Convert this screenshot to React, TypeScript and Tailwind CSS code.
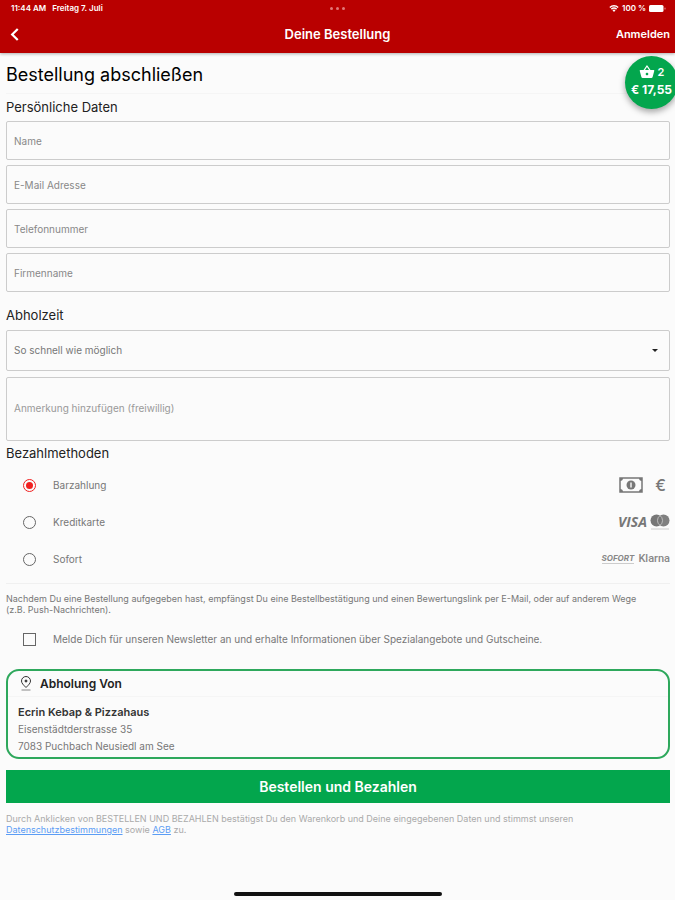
import { useState } from "react";
import { MdShoppingBasket } from "react-icons/md";

const fields = [
  { id: "name", label: "Name", type: "text" },
  { id: "email", label: "E-Mail Adresse", type: "email" },
  { id: "phone", label: "Telefonnummer", type: "tel" },
  { id: "company", label: "Firmenname", type: "text" },
];

export default function App() {
  return (
    <div className="relative flex min-h-screen flex-col overflow-hidden bg-[#fbfbfb] font-['Inter',sans-serif] text-[#222]">
      <Header />
      <CartBadge />
      <main className="pr-[5px] pl-1.5">
        <h1 className="flex h-[41px] items-center border-b border-[#f5f5f5] pt-0.5 text-[18px] text-black">
          Bestellung abschließen
        </h1>
        <PersonalData />
        <PickupTime />
        <PaymentMethods />
        <Newsletter />
        <PickupAddress />
        <button className="mt-[11px] block h-[33px] w-full bg-[#03a64d] text-[14px] font-semibold text-white">
          Bestellen und Bezahlen
        </button>
        <p className="mt-2.5 pr-16 text-[9px] leading-[11px] text-[#aaa]">
          Durch Anklicken von BESTELLEN UND BEZAHLEN bestätigst Du den Warenkorb
          und Deine eingegebenen Daten und stimmst unseren{" "}
          <a href="#datenschutz" className="text-[#5b9df5] underline">
            Datenschutzbestimmungen
          </a>{" "}
          sowie{" "}
          <a href="#agb" className="text-[#5b9df5] underline">
            AGB
          </a>{" "}
          zu.
        </p>
      </main>
      <div className="mx-auto mt-auto mb-1 h-1 w-[208px] rounded-full bg-[#111]" />
    </div>
  );
}

const Header = () => {
  return (
    <header className="bg-[#b90000] text-white shadow-[0_1px_3px_rgba(0,0,0,0.3)]">
      <div className="grid h-4 grid-cols-3 items-center px-[9px] text-[8px] font-semibold">
        <div className="flex gap-1.5 pl-0.5">
          <span>11:44 AM</span>
          <span>Freitag 7. Juli</span>
        </div>
        <div className="flex justify-center gap-[3px]">
          <span className="size-[3px] rounded-full bg-[#e27878]" />
          <span className="size-[3px] rounded-full bg-[#e27878]" />
          <span className="size-[3px] rounded-full bg-[#e27878]" />
        </div>
        <div className="flex items-center justify-end gap-[3px]">
          <svg viewBox="0 0 20 15" className="h-[7px] w-[10px]" fill="white">
            <path d="M10 15 6.8 11.4a4.6 4.6 0 0 1 6.4 0z" />
            <path d="M5.5 10 3.4 7.7a9.7 9.7 0 0 1 13.2 0L14.5 10a6.5 6.5 0 0 0-9 0z" />
            <path d="M2.2 6.4 0 4.1a14.5 14.5 0 0 1 20 0l-2.2 2.3a11.4 11.4 0 0 0-15.6 0z" />
          </svg>
          <span>100 %</span>
          <svg viewBox="0 0 34 14" className="h-[7px] w-[17px]">
            <rect x="0" y="0" width="29" height="14" rx="3" fill="white" />
            <rect x="31" y="5" width="2" height="4" rx="1" fill="#e9a0a0" />
          </svg>
        </div>
      </div>
      <div className="grid h-[37px] grid-cols-3 items-center px-[5px]">
        <button aria-label="Zurück" className="w-fit pl-[5px]">
          <svg
            viewBox="0 0 9 14"
            className="h-[13px] w-[9px]"
            fill="none"
            stroke="white"
            strokeWidth="2.4"
          >
            <path d="M8 1 2 7l6 6" />
          </svg>
        </button>
        <span className="text-center text-[13px] font-semibold">
          Deine Bestellung
        </span>
        <a href="#anmelden" className="text-right text-[11px] font-semibold">
          Anmelden
        </a>
      </div>
    </header>
  );
};

const CartBadge = () => {
  return (
    <button className="absolute top-14 -right-[3px] flex size-[53px] flex-col items-center justify-center rounded-full bg-[#03a64d] pb-1 text-white shadow-[0_3px_6px_rgba(0,0,0,0.35)]">
      <span className="flex items-center gap-[3px] text-[11px] leading-[18px] font-semibold">
        <MdShoppingBasket className="size-4" />2
      </span>
      <span className="text-[12px] leading-[18px] font-bold">€ 17,55</span>
    </button>
  );
};

const PersonalData = () => {
  return (
    <section>
      <h2 className="flex h-[27px] items-center text-[13px]">
        Persönliche Daten
      </h2>
      <div className="flex flex-col gap-[5px]">
        {fields.map((field) => (
          <input
            key={field.id}
            id={field.id}
            type={field.type}
            aria-label={field.label}
            placeholder={field.label}
            className="h-[39px] w-full rounded-xs border border-[#ccc] px-[7px] text-[10px] placeholder:text-[#888]"
          />
        ))}
      </div>
    </section>
  );
};

const PickupTime = () => {
  return (
    <section>
      <h2 className="mt-2.5 flex h-7 items-center text-[13px]">
        <label htmlFor="time">Abholzeit</label>
      </h2>
      <div className="relative">
        <select
          id="time"
          className="block h-[41px] w-full appearance-none rounded-xs border border-[#ccc] px-[7px] text-[10px] text-[#777]"
        >
          <option>So schnell wie möglich</option>
        </select>
        <svg
          viewBox="0 0 6 3"
          className="pointer-events-none absolute top-[19px] right-3 h-[3px] w-[6px]"
        >
          <path d="M0 0h6L3 3z" fill="#222" />
        </svg>
      </div>
      <textarea
        aria-label="Anmerkung hinzufügen (freiwillig)"
        placeholder="Anmerkung hinzufügen (freiwillig)"
        className="mt-1.5 block h-16 w-full resize-none rounded-xs border border-[#ccc] px-[7px] py-[22px] text-[10px] leading-4 placeholder:text-[#999]"
      />
    </section>
  );
};

const CashIcons = () => (
  <div className="flex items-center gap-3 pr-1 pb-0.5">
    <svg viewBox="0 0 24 16" className="h-4 w-6" fill="none" stroke="#777">
      <rect x="1" y="1" width="22" height="14" strokeWidth="1.5" />
      <path
        d="M1 1h3a3 3 0 0 1-3 3zM23 1h-3a3 3 0 0 0 3 3zM1 15h3a3 3 0 0 0-3-3zM23 15h-3a3 3 0 0 1 3-3z"
        fill="#777"
        stroke="none"
      />
      <circle cx="12" cy="8" r="4.5" fill="#777" stroke="none" />
      <path d="M12 5.5v5" stroke="#fbfbfb" strokeWidth="1.4" />
    </svg>
    <span className="text-[16px] leading-5 font-medium text-[#777]">€</span>
  </div>
);

const CardIcons = () => (
  <div className="flex items-center gap-[3px] pb-0.5">
    <span className="font-['Open_Sans',sans-serif] text-[14px] leading-4 font-bold text-[#777] italic">
      VISA
    </span>
    <svg viewBox="0 0 20 16" className="h-4 w-5">
      <circle cx="6.5" cy="6.5" r="6" fill="#777" />
      <circle cx="13.5" cy="6.5" r="6" fill="#808080" />
      <path
        d="M10 1.6a6 6 0 0 1 0 9.8a6 6 0 0 1 0-9.8z"
        fill="#777"
        stroke="#ccc"
        strokeWidth=".8"
      />
      <path d="M1 15h18" stroke="#ccc" />
    </svg>
  </div>
);

const SofortIcons = () => (
  <div className="flex items-center gap-1 pb-0.5 text-[#888]">
    <span className="border-b border-[#ccc] text-[8px] leading-[9px] font-bold italic">
      SOFORT
    </span>
    <span className="font-['Roboto',sans-serif] text-[11px] leading-4 font-medium">
      Klarna
    </span>
  </div>
);

const methods = [
  { id: "cash", label: "Barzahlung", icons: <CashIcons /> },
  { id: "card", label: "Kreditkarte", icons: <CardIcons /> },
  { id: "sofort", label: "Sofort", icons: <SofortIcons /> },
];

const PaymentMethods = () => {
  const [method, setMethod] = useState("cash");
  return (
    <section className="border-b border-[#f0f0f0] pb-[5px]">
      <h2 className="flex h-[26px] items-center text-[13px]">Bezahlmethoden</h2>
      {methods.map((item) => (
        <div key={item.id} className="flex h-[37px] items-center">
          <input
            type="radio"
            name="payment"
            id={item.id}
            checked={method === item.id}
            onChange={() => setMethod(item.id)}
            className="ml-[17px] size-[13px] appearance-none rounded-full border border-[#666] bg-clip-content p-[2px] checked:border-[#f02020] checked:bg-[#f02020]"
          />
          <label
            htmlFor={item.id}
            className="flex-1 pl-[17px] text-[10px] text-[#777]"
          >
            {item.label}
          </label>
          {item.icons}
        </div>
      ))}
    </section>
  );
};

const Newsletter = () => {
  return (
    <section>
      <p className="mt-[9px] pr-4 text-[9px] leading-[11px] text-[#777]">
        Nachdem Du eine Bestellung aufgegeben hast, empfängst Du eine
        Bestellbestätigung und einen Bewertungslink per E-Mail, oder auf anderem
        Wege (z.B. Push-Nachrichten).
      </p>
      <div className="flex h-12 items-center">
        <input
          type="checkbox"
          id="newsletter"
          className="ml-[17px] size-[13px] appearance-none border border-[#666] checked:bg-[#03a64d]"
        />
        <label
          htmlFor="newsletter"
          className="pl-[17px] text-[10px] text-[#777]"
        >
          Melde Dich für unseren Newsletter an und erhalte Informationen über
          Spezialangebote und Gutscheine.
        </label>
      </div>
    </section>
  );
};

const PickupAddress = () => {
  return (
    <section className="mt-1.5 rounded-[13px] border-2 border-[#2ea85c]">
      <h2 className="flex h-[26px] items-center gap-2 border-b border-[#f5f5f5] pl-3 text-[12px] font-semibold">
        <svg
          viewBox="0 0 12 15"
          className="h-[15px] w-3"
          fill="none"
          stroke="#333"
        >
          <path d="M6 11.5C3.5 9 1.5 7.2 1.5 5a4.5 4.5 0 0 1 9 0c0 2.2-2 4-4.5 6.5z" />
          <circle cx="6" cy="5" r="1" fill="#333" />
          <path d="M1.5 14h9" stroke="#888" />
        </svg>
        Abholung Von
      </h2>
      <address className="px-2.5 pt-[7px] pb-0.5 text-[10px] leading-[17px] text-[#777] not-italic">
        <strong className="block text-[11px] leading-[17px] font-semibold text-[#333]">
          Ecrin Kebap &amp; Pizzahaus
        </strong>
        Eisenstädtderstrasse 35
        <br />
        7083 Puchbach Neusiedl am See
      </address>
    </section>
  );
};
